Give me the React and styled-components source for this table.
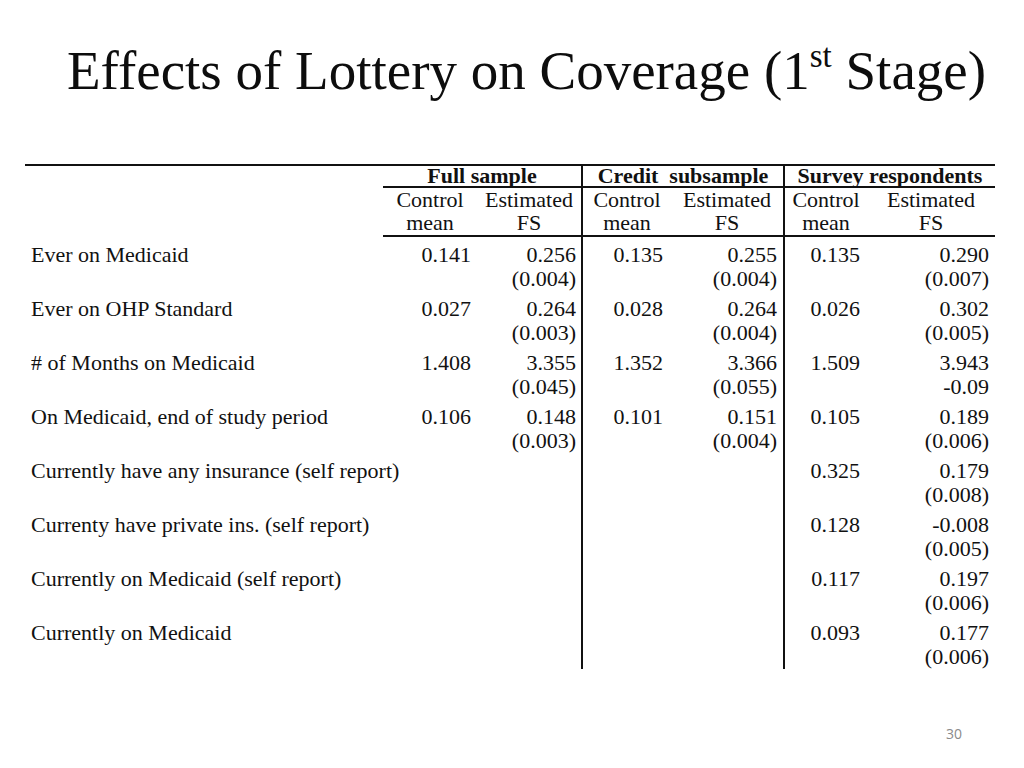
import React from "react";
import styled, { createGlobalStyle, css } from "styled-components";

const Global = createGlobalStyle`
  *, *::before, *::after { box-sizing: border-box; }
  html, body { margin: 0; padding: 0; background: #ffffff; }
`;

const Slide = styled.div`
  width: 1024px;
  height: 768px;
  display: flex;
  flex-direction: column;
  background: #ffffff;
  color: #000;
  font-family: "Liberation Serif", "Times New Roman", serif;
`;

const Title = styled.h1`
  margin: 0;
  padding: 38px 0 0 67px;
  font-size: 55px;
  font-weight: normal;
  line-height: 66px;
  height: 104px;
  white-space: nowrap;
  color: #0d0d0d;
`;

const Sup = styled.sup`
  font-size: 33px;
  line-height: 0;
  vertical-align: 22px;
`;

const Table = styled.div`
  display: grid;
  grid-template-columns: 358px 94px 104px 90px 112px 84px 128px;
  grid-template-rows: 22px 49px repeat(8, 54px);
  width: 970px;
  margin: 60px 0 0 25px;
  border-top: 2px solid #111;
  font-size: 22px;
  color: #111;
`;

const divider = css`
  ${(p) => p.$divider && "border-left: 2px solid #111;"}
`;

const Blank = styled.div``;

const GroupHead = styled.div`
  grid-column: span 2;
  border-bottom: 2px solid #111;
  ${divider}
  font-weight: bold;
  text-align: center;
  line-height: 20px;
  white-space: pre;
`;

const SubHead = styled.div`
  border-bottom: 2px solid #111;
  ${divider}
  text-align: center;
  line-height: 23px;
  padding-left: ${(p) => (p.$shift ? p.$shift : 0)}px;
`;

const LabelCell = styled.div`
  padding: 6px 0 0 6px;
  line-height: 24px;
  white-space: nowrap;
`;

const NumCell = styled.div`
  ${divider}
  display: flex;
  flex-direction: column;
  align-items: flex-end;
  padding: 6px ${(p) => p.$pad}px 0 0;
  line-height: 24px;
  white-space: nowrap;
`;

const Footer = styled.div`
  margin-top: auto;
  padding: 0 62px 24px 0;
  text-align: right;
  font-family: "Open Sans", "Liberation Sans", sans-serif;
  font-size: 14px;
  line-height: 20px;
  color: #8a8a8a;
`;

const groups = [
  { name: "Full sample", divider: false },
  { name: "Credit  subsample", divider: true },
  { name: "Survey respondents", divider: true },
];

const ctrlPad = [6, 8, 7];
const estPad = [5, 6, 6];

const rows = [
  ["Ever on Medicaid", ["0.141"], ["0.256", "(0.004)"], ["0.135"], ["0.255", "(0.004)"], ["0.135"], ["0.290", "(0.007)"]],
  ["Ever on OHP Standard", ["0.027"], ["0.264", "(0.003)"], ["0.028"], ["0.264", "(0.004)"], ["0.026"], ["0.302", "(0.005)"]],
  ["# of Months on Medicaid", ["1.408"], ["3.355", "(0.045)"], ["1.352"], ["3.366", "(0.055)"], ["1.509"], ["3.943", "-0.09"]],
  ["On Medicaid, end of study period", ["0.106"], ["0.148", "(0.003)"], ["0.101"], ["0.151", "(0.004)"], ["0.105"], ["0.189", "(0.006)"]],
  ["Currently have any insurance (self report)", [], [], [], [], ["0.325"], ["0.179", "(0.008)"]],
  ["Currenty have private ins. (self report)", [], [], [], [], ["0.128"], ["-0.008", "(0.005)"]],
  ["Currently on Medicaid (self report)", [], [], [], [], ["0.117"], ["0.197", "(0.006)"]],
  ["Currently on Medicaid", [], [], [], [], ["0.093"], ["0.177", "(0.006)"]],
];

export default function App() {
  return (
    <>
      <Global />
      <Slide>
        <Title>
          Effects of Lottery on Coverage (1<Sup>st</Sup> Stage)
        </Title>
        <Table>
          <Blank />
          {groups.map((g) => (
            <GroupHead key={g.name} $divider={g.divider}>
              {g.name}
            </GroupHead>
          ))}
          <Blank />
          {groups.map((g) => (
            <React.Fragment key={g.name}>
              <SubHead $divider={g.divider}>
                Control
                <br />
                mean
              </SubHead>
              <SubHead>
                Estimated
                <br />
                FS
              </SubHead>
            </React.Fragment>
          ))}
          {rows.map(([label, ...cells]) => (
            <React.Fragment key={label}>
              <LabelCell>{label}</LabelCell>
              {cells.map((vals, i) => {
                const g = Math.floor(i / 2);
                const isCtrl = i % 2 === 0;
                return (
                  <NumCell
                    key={i}
                    $divider={isCtrl && g > 0}
                    $pad={isCtrl ? ctrlPad[g] : estPad[g]}
                  >
                    {vals.map((v) => (
                      <span key={v}>{v}</span>
                    ))}
                  </NumCell>
                );
              })}
            </React.Fragment>
          ))}
        </Table>
        <Footer>30</Footer>
      </Slide>
    </>
  );
}
